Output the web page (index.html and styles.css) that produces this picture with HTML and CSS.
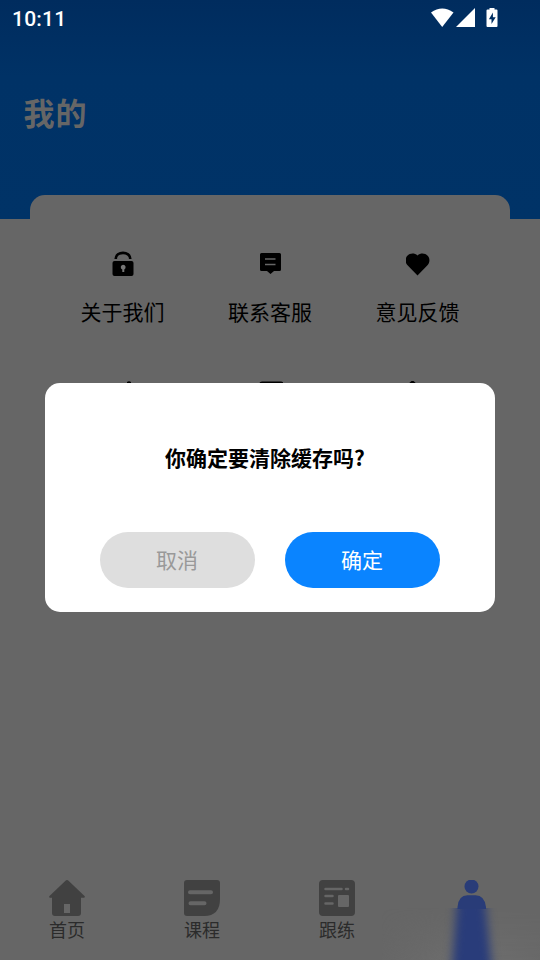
FILE: index.html
```html
<!DOCTYPE html>
<html lang="zh-CN">
<head>
<meta charset="utf-8">
<title>我的</title>
<link rel="stylesheet" href="styles.css">
</head>
<body>
<div class="screen">
  <header class="header">
    <div class="status">
      <span class="clock">10:11</span>
      <svg class="status-icons" width="67" height="20" viewBox="0 0 67 20" fill="#fff">
        <path d="M0 4.600Q11.200-3.800 22.500 4.600L11.200 19Z"/>
        <path d="M44 0V19H25Z"/>
        <path d="M58.500 0h5v1.600h2q1 0 1 1V18q0 1-1 1H56.500q-1 0-1-1V2.600q0-1 1-1h2z"/>
        <path d="M61.900 4.600V9.200H64.700L60.500 16V11.200H57.900Z" fill="#002e61"/>
      </svg>
    </div>
    <h1 class="title">我的</h1>
  </header>
  <main class="card">
    <div class="grid">
      <div class="item">
        <svg width="24" height="26" viewBox="0 0 24 26"><path d="M4.700 8C4.700-.2 19.300-.2 19.300 8" fill="none" stroke="#000" stroke-width="2.600"/><rect x="1.500" y="10" width="21" height="15" rx="2"/><path d="M12 13.700a2.500 2.500 0 0 1 1.300 4.700V21h-2v-2.500A2.500 2.500 0 0 1 12 13.700" fill="#777"/></svg>
        <span>关于我们</span>
      </div>
      <div class="item">
        <svg width="24" height="26" viewBox="0 0 24 26"><path d="M3.500 2h18q1.500 0 1.500 1.500v15q0 1.500-1.500 1.500H16l-3.500 3L9 20H3.500Q2 20 2 18.500v-15Q2 2 3.500 2z"/><path d="M7 8h10.500M7 13.500h10.500" stroke="#666" stroke-width="1.700"/></svg>
        <span>联系客服</span>
      </div>
      <div class="item">
        <svg width="24" height="26" viewBox="0 0 24 26"><path d="M11.500 24.500L1.300 14C-.9 11.600-.9 7 1.300 4.700 4.200 1.900 8.500 1.900 11.500 4.500c3-2.600 7.300-2.600 10.200.2 2.300 2.300 2.300 6.900 0 9.300z"/></svg>
        <span>意见反馈</span>
      </div>
      <div class="item">
        <svg width="24" height="26" viewBox="0 0 24 26"><path d="M16 1q2-1.500 4 0V20h-4z"/></svg>
      </div>
      <div class="item">
        <svg width="26" height="26" viewBox="0 0 26 26"><path d="M5 .5h19q2 0 3 2v19H2v-19q1-2 3-2z"/></svg>
      </div>
      <div class="item">
        <svg width="24" height="26" viewBox="0 0 24 26"><path d="M0 5L5.500 0h2L13 5V22H0Z"/></svg>
      </div>
    </div>
  </main>
  <nav class="tabs">
    <div class="tab">
      <svg width="36" height="36" viewBox="0 0 36 36"><path d="M16.500.8q1.500-1.400 3 0L35.500 16q1 1.500-.8 1.800H32V33q0 3-3 3H6q-3 0-3-3V17.800H1.200Q-.5 17.500.5 16z"/><path class="cut" d="M15 24h6v9h-6z"/></svg>
      <span>首页</span>
    </div>
    <div class="tab">
      <svg width="36" height="36" viewBox="0 0 36 36"><path d="M3 0h30q3 0 3 3v16Q36 36 20 36H3q-3 0-3-3V3q0-3 3-3z"/><path class="cut-line" d="M6 12.300h21M6.500 23.300h14"/></svg>
      <span>课程</span>
    </div>
    <div class="tab">
      <svg width="36" height="36" viewBox="0 0 36 36"><rect width="36" height="36" rx="4"/><path class="cut-line thin" d="M6.500 9h16M27 9h2M6.500 16h7M6.500 23.500h7"/><rect class="cut" x="19" y="15" width="11" height="12" rx="1"/></svg>
      <span>跟练</span>
    </div>
    <div class="tab active">
      <div class="haze"></div>
      <div class="glow"><div class="blur"><div class="beam"></div></div></div>
      <svg width="36" height="36" viewBox="0 0 36 36"><circle cx="17.500" cy="6.500" r="7"/><path d="M3.500 29V27Q4.500 15.300 13.500 15.300h8Q30.500 15.300 32 27v2z"/></svg>
    </div>
  </nav>
  <div class="dialog">
    <p class="question">你确定要清除缓存吗?</p>
    <div class="actions">
      <button class="btn cancel">取消</button>
      <button class="btn confirm">确定</button>
    </div>
  </div>
</div>
</body>
</html>
```
FILE: styles.css
```css
* { box-sizing: border-box; }
body { margin: 0; font-family: "Noto Sans CJK SC", sans-serif; }
.screen {
  position: relative;
  display: flex;
  flex-direction: column;
  width: 540px;
  height: 960px;
  overflow: hidden;
  background: #666;
}
.header { height: 219px; background: linear-gradient(#002c5e, #003266 35%, #003367); }
.status {
  display: flex;
  justify-content: space-between;
  height: 36px;
  padding: 8px 42px 0 12px;
}
.clock {
  color: #fff;
  font: 500 21px/22px Roboto, sans-serif;
  letter-spacing: .2px;
}
.title {
  margin: 54px 0 0 23.500px;
  font-size: 31px;
  line-height: 44px;
  letter-spacing: 1px;
  color: #666;
}
.card {
  flex: 1;
  margin: -24px 30px 0;
  padding-top: 56px;
  border-radius: 15px 15px 0 0;
  background: #666;
}
.grid {
  display: grid;
  grid-template-columns: repeat(3, 147.500px);
  grid-auto-rows: 129.500px;
  justify-content: center;
}
.item { display: flex; flex-direction: column; align-items: center; }
.item span { margin-top: 19px; font-size: 21px; line-height: 30px; color: #000; }
.tabs { display: flex; height: 84px; padding-top: 4px; }
.tab {
  position: relative;
  left: -1px;
  flex: 1;
  display: flex;
  flex-direction: column;
  align-items: center;
  font-size: 18px;
  line-height: 27px;
  color: #2b2b2b;
}
.tab span { padding-left: 1px; }
.tab svg { position: relative; fill: #414141; }
.tab .cut { fill: #666; }
.tab .cut-line { fill: none; stroke: #666; stroke-width: 4; stroke-linecap: round; }
.tab .thin { stroke-width: 2.500; }
.tab.active svg { fill: #293c78; }
.haze {
  position: absolute;
  inset: 28px -1px -4px -22px;
  background: linear-gradient(100deg, #6660 0%, #6f6f6f 60%, #696969 100%);
  mask-image: linear-gradient(transparent, #000);
}
.glow {
  position: absolute;
  top: 28px;
  left: 19px;
  width: 96px;
  height: 54px;
  overflow: hidden;
}
.blur { height: 90px; margin-top: -18px; filter: blur(5px); }
.beam {
  width: 96px;
  height: 90px;
  background: #293c7a;
  clip-path: polygon(35px 0, 61px 0, 70px 100%, 28px 100%);
}
.dialog {
  position: absolute;
  top: 383px;
  left: 45px;
  width: 450px;
  height: 229px;
  padding: 59px 55px 0;
  border-radius: 15px;
  background: #fff;
}
.question {
  margin: 0 10px 0 0;
  font-size: 21px;
  font-weight: 700;
  line-height: 30px;
  text-align: center;
  color: #000;
}
.actions { display: flex; gap: 30px; margin-top: 60px; }
.btn {
  flex: 1;
  height: 56px;
  padding: 0 1px 1px 0;
  border: 0;
  border-radius: 28px;
  font: 21px/55px "Noto Sans CJK SC", sans-serif;
}
.cancel { background: #dedede; color: #999; }
.confirm { background: #0a84ff; color: #fff; }
```
